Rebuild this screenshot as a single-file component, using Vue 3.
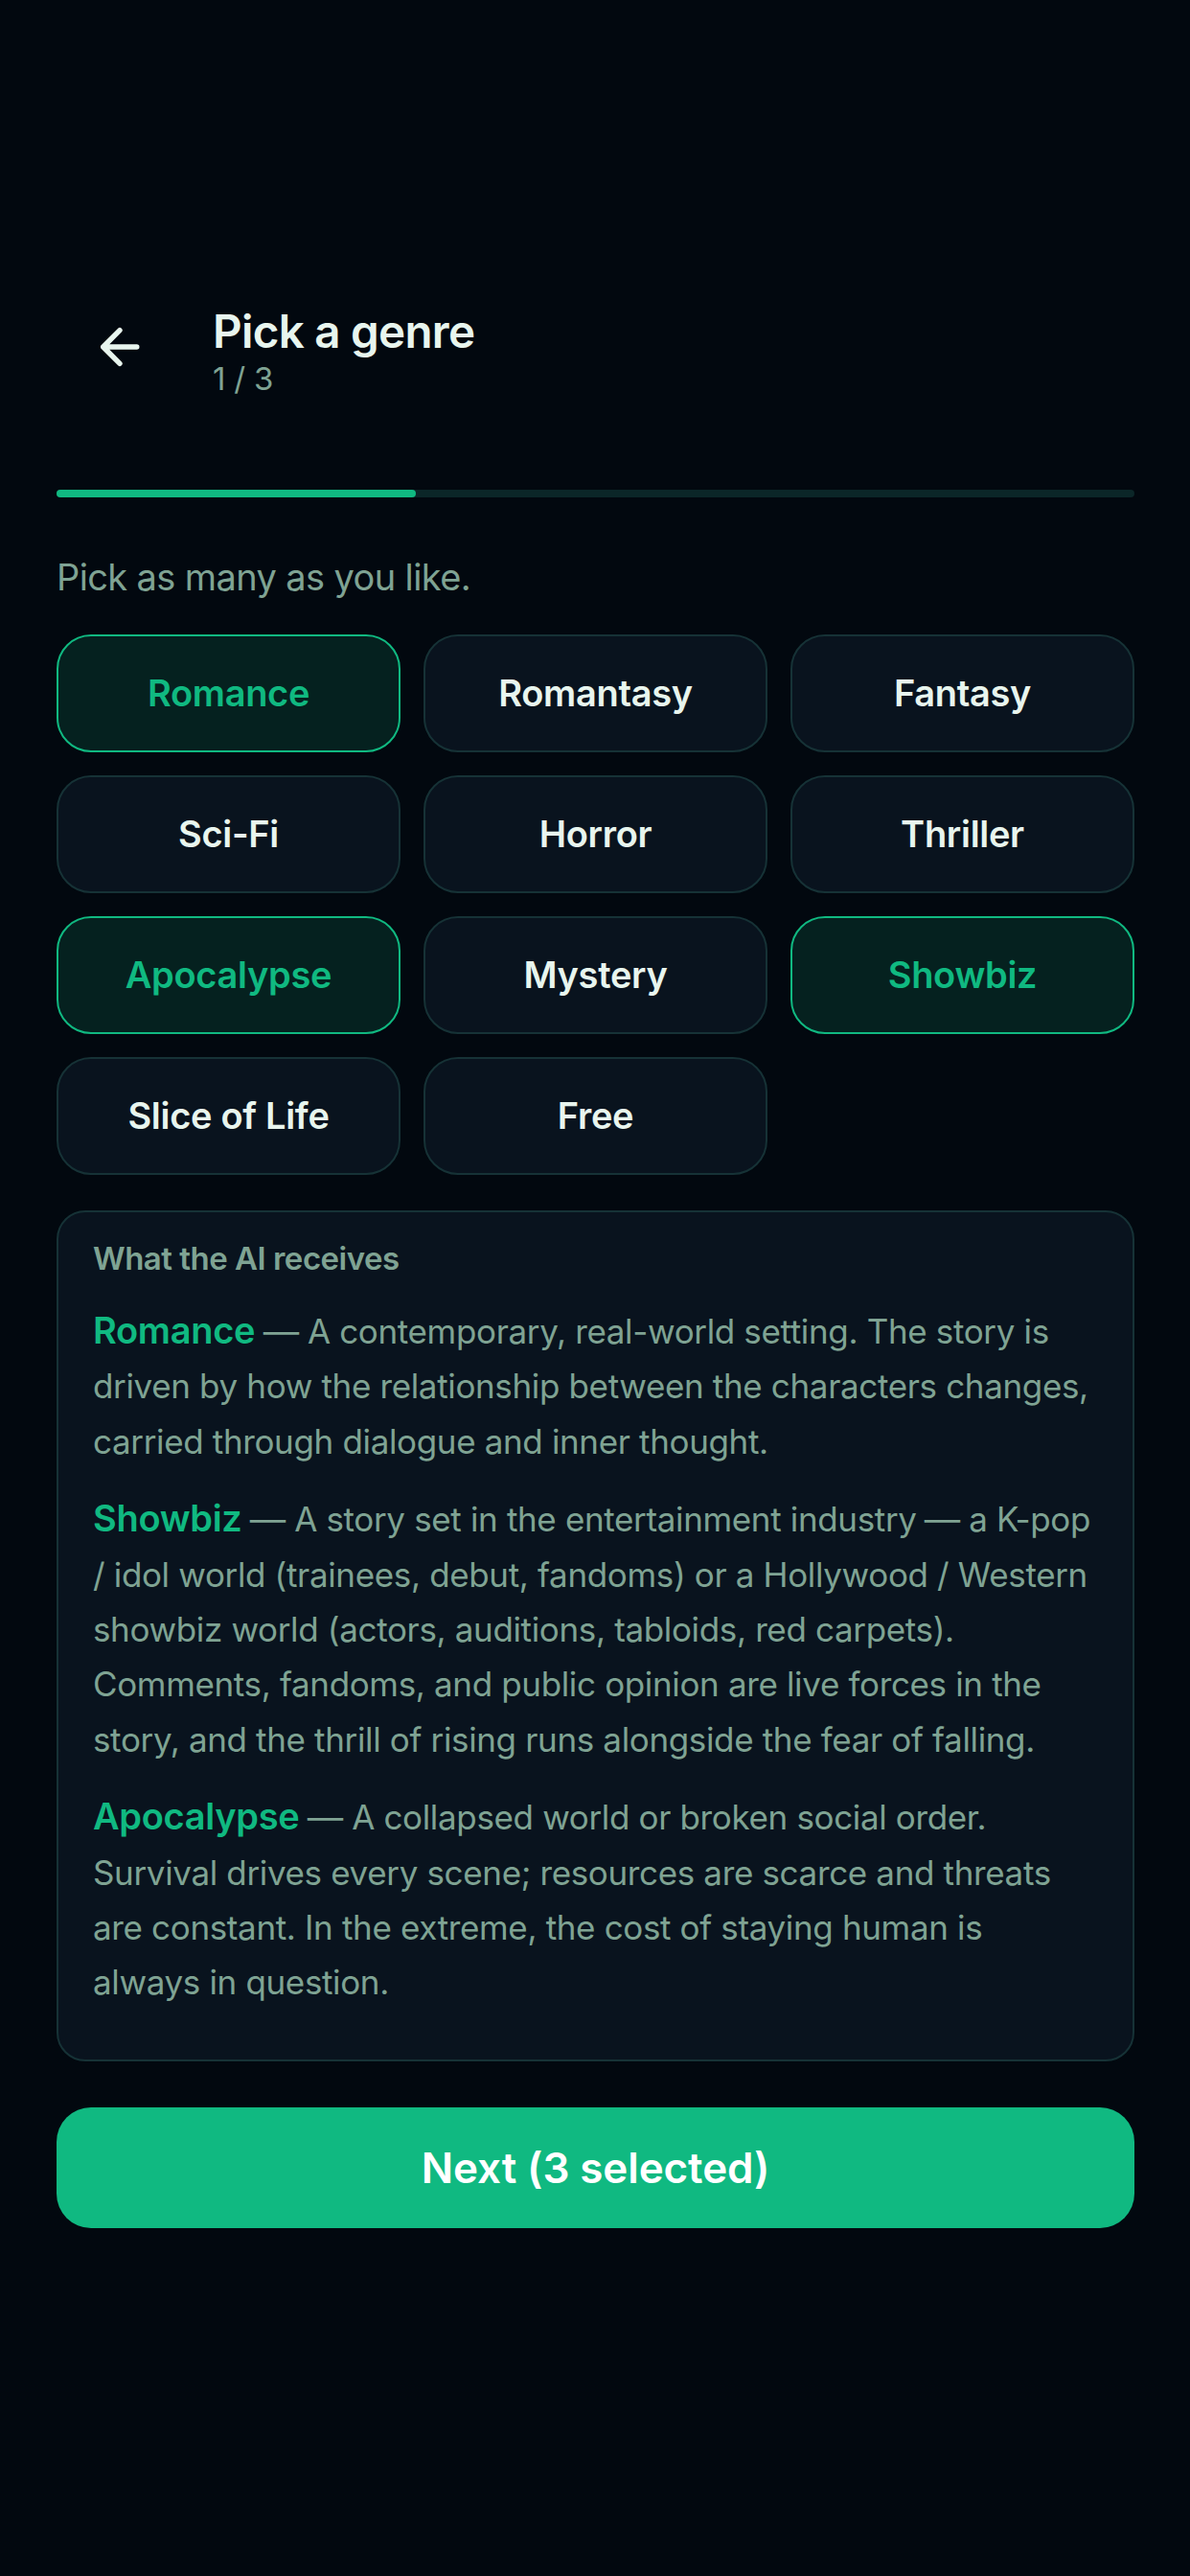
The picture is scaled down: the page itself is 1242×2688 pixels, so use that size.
<script setup>
const genres = ['Romance', 'Romantasy', 'Fantasy', 'Sci-Fi', 'Horror', 'Thriller', 'Apocalypse', 'Mystery', 'Showbiz', 'Slice of Life', 'Free']
const selected = ['Romance', 'Showbiz', 'Apocalypse']
const notes = [
  { name: 'Romance', lines: [['A contemporary, real-world setting. The story is'], ['driven by how the relationship between the characters changes,'], ['carried through dialogue and inner thought.']] },
  { name: 'Showbiz', lines: [['A story set in the entertainment industry ', ' a K-pop'], ['/ idol world (trainees, debut, fandoms) or a Hollywood / Western'], ['showbiz world (actors, auditions, tabloids, red carpets).'], ['Comments, fandoms, and public opinion are live forces in the'], ['story, and the thrill of rising runs alongside the fear of falling.']] },
  { name: 'Apocalypse', lines: [['A collapsed world or broken social order.'], ['Survival drives every scene; resources are scarce and threats'], ['are constant. In the extreme, the cost of staying human is'], ['always in question.']] },
]
</script>

<template>
  <main class="screen">
    <header class="header">
      <button class="back" aria-label="Back">
        <svg width="44" height="44" viewBox="0 0 44 44" fill="none" stroke="#e8f5ee" stroke-width="5.4" stroke-linecap="round" stroke-linejoin="round"><path d="M39.8 22H4.7M22 4.7L4.7 22L22 39.3" /></svg>
      </button>
      <div>
        <h1>Pick a genre</h1>
        <div class="step">1 / 3</div>
      </div>
    </header>
    <div class="track"><div class="bar"></div></div>
    <p class="hint">Pick as many as you like.</p>
    <div class="grid">
      <button v-for="g in genres" :key="g" class="chip" :class="{ on: selected.includes(g) }">{{ g }}</button>
    </div>
    <section class="card">
      <h2>What the AI receives</h2>
      <p v-for="n in notes" :key="n.name" class="note">
        <b>{{ n.name }}</b><template v-for="(parts, i) in n.lines" :key="i"><template v-if="i === 0">{{ ' ' }}<span class="dash">—</span>{{ ' ' }}</template><br v-else /><template v-for="(part, j) in parts" :key="j"><span v-if="j" class="dash">—</span>{{ part }}</template></template>
      </p>
    </section>
    <button class="next">Next (3 selected)</button>
  </main>
</template>

<style>
body { margin: 0; background: #02080f; }
</style>
<style scoped>
.screen { box-sizing: border-box; width: 1242px; height: 2688px; padding: 313px 58px 0 59px; background: #02080f; font-family: Inter, sans-serif; color: #e8f5ee; overflow: hidden; }
button { font-family: inherit; border: 0; padding: 0; background: none; color: inherit; }
.header { display: flex; height: 198px; }
.back { width: 132px; height: 98px; display: flex; align-items: center; justify-content: center; margin-right: 31px; }
h1 { margin: 0; font-size: 47.5px; line-height: 65px; font-weight: 600; letter-spacing: -0.7px; }
.step { font-size: 33px; line-height: 34px; color: #7fa393; letter-spacing: -0.2px; }
.track { height: 8px; border-radius: 4px; background: #0b2628; }
.bar { width: 33.333%; height: 8px; border-radius: 4px; background: #10b981; }
.hint { margin: 57px 0 34px; font-size: 38px; line-height: 52px; color: #7fa393; letter-spacing: -0.62px; }
.grid { display: grid; grid-template-columns: repeat(3, 1fr); gap: 24px; }
.chip { box-sizing: border-box; height: 123px; padding-bottom: 2px; border: 2px solid #163236; border-radius: 36px; background: #09131e; font-size: 38px; font-weight: 600; letter-spacing: -0.3px; }
.chip.on { border-color: #10b981; background: #05211f; color: #10b981; }
.card { box-sizing: border-box; height: 888px; margin-top: 37px; padding: 28px 36px; border: 2px solid #163236; border-radius: 30px; background: #09131e; color: #7fa393; }
h2 { margin: 0 0 27px; font-size: 33px; line-height: 41px; font-weight: 600; letter-spacing: -0.5px; }
.note { margin: 0 0 24px; font-size: 35px; line-height: 57.4px; white-space: nowrap; letter-spacing: -0.35px; }
.note b { font-size: 38px; line-height: 1; font-weight: 600; color: #10b981; letter-spacing: -0.3px; }
.dash { display: inline-block; line-height: 1; transform: scaleX(1.07); margin: 0 1px 0 0; }
.next { display: block; width: 100%; height: 126px; margin-top: 48px; border-radius: 36px; background: #10b981; color: #fff; font-size: 44px; font-weight: 600; letter-spacing: -0.1px; }
</style>
